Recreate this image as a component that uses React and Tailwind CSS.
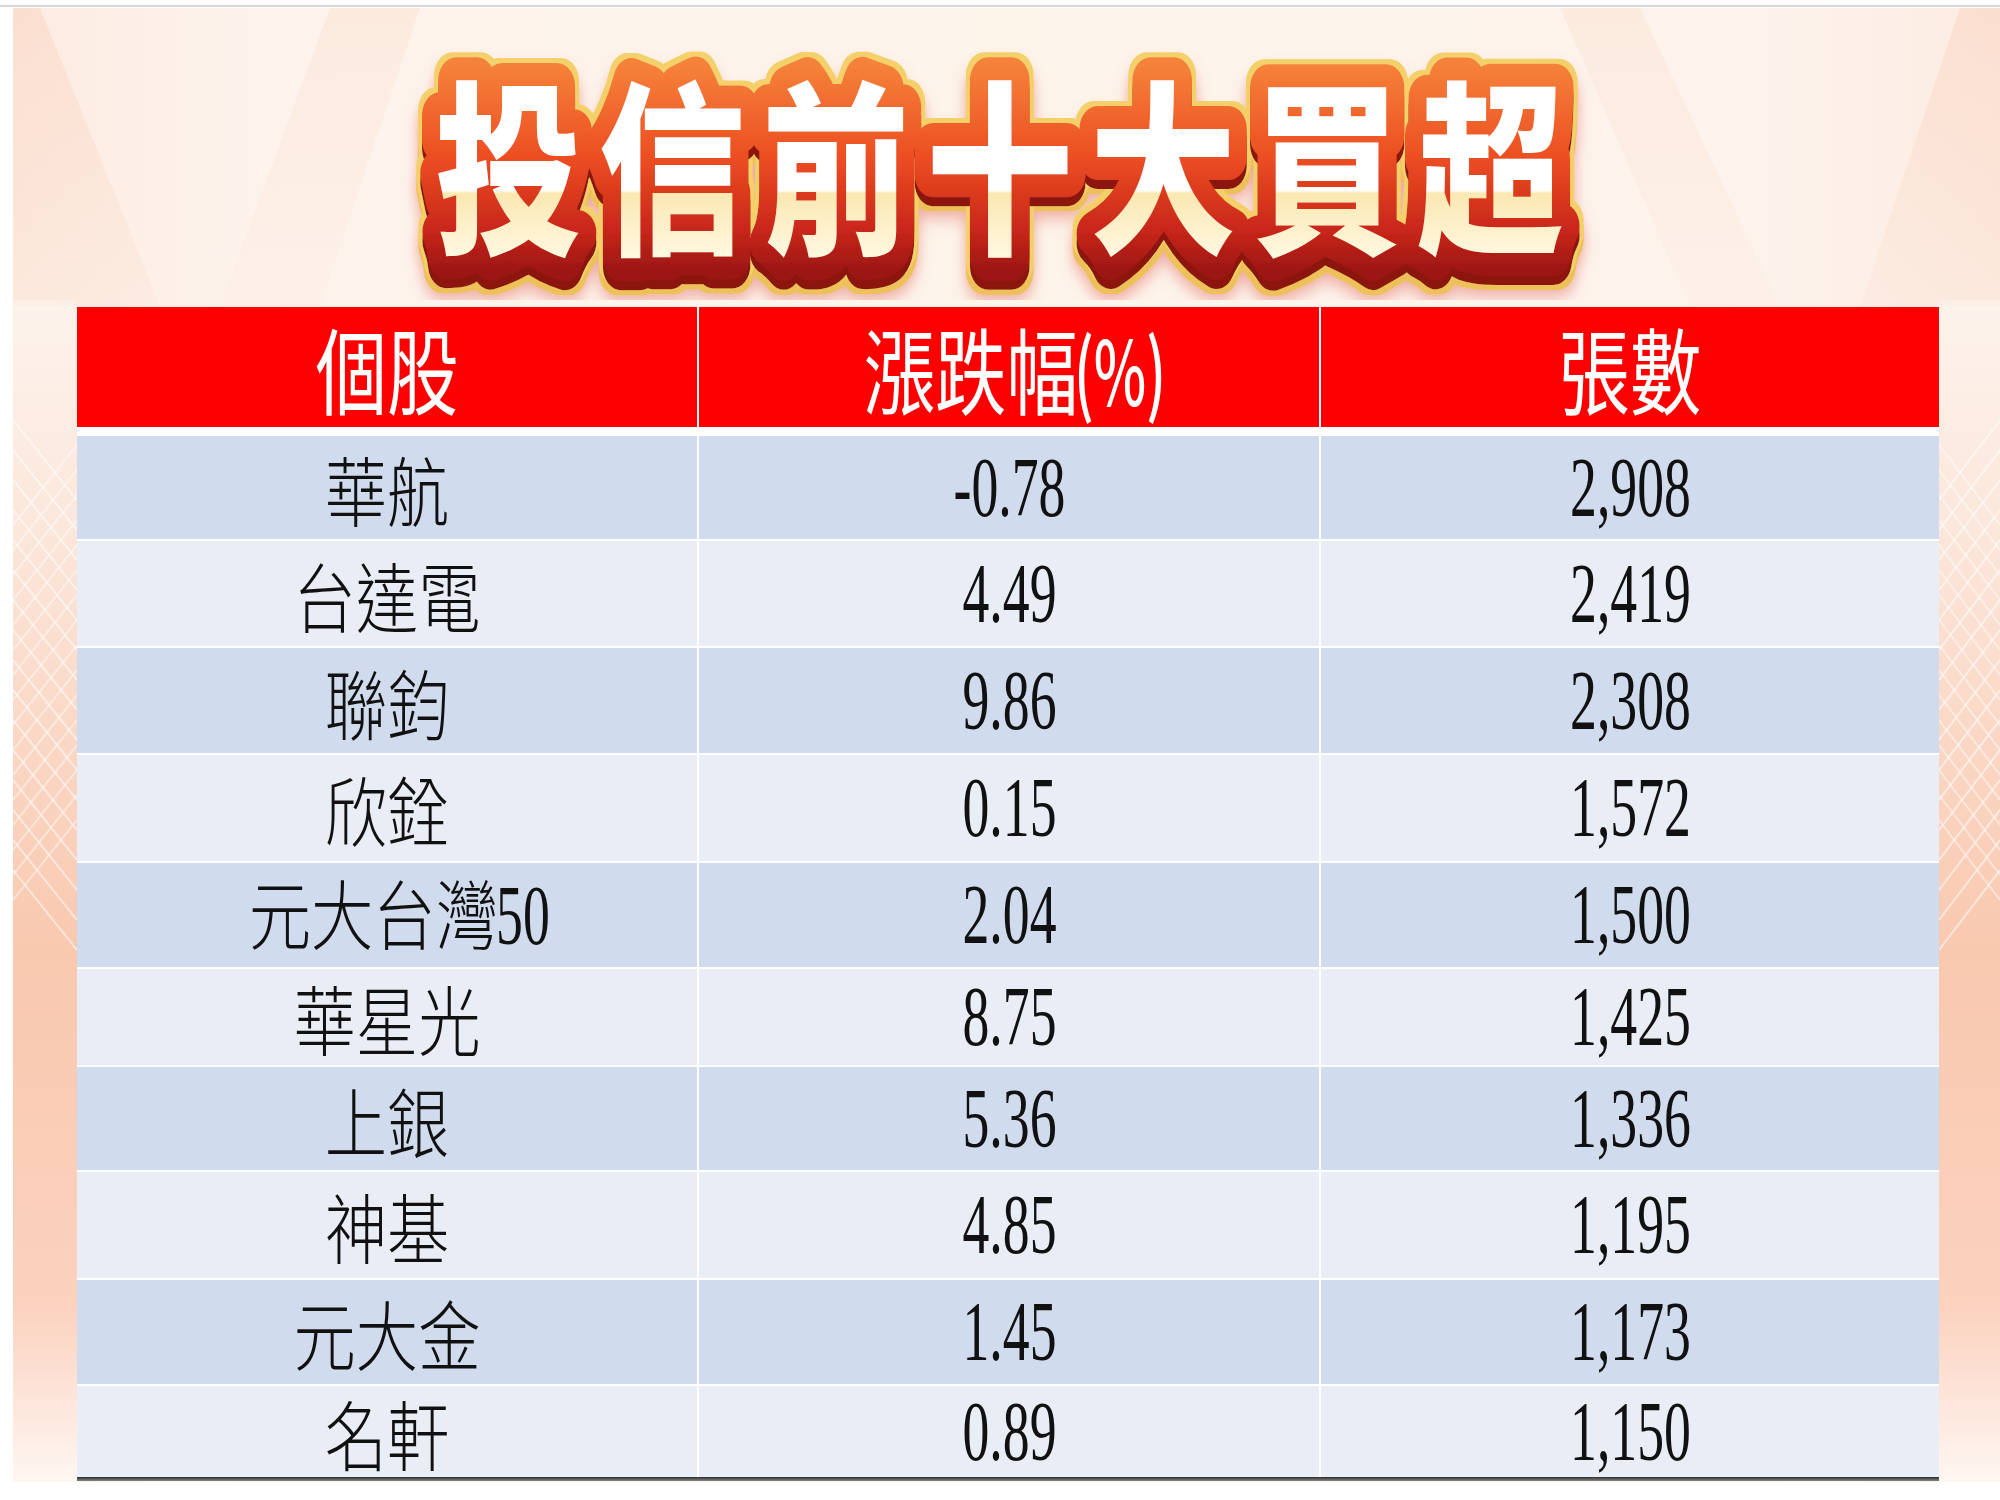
import React from "react";

const rows = [
  ["華航", "-0.78", "2,908"],
  ["台達電", "4.49", "2,419"],
  ["聯鈞", "9.86", "2,308"],
  ["欣銓", "0.15", "1,572"],
  ["元大台灣", "2.04", "1,500", "50"],
  ["華星光", "8.75", "1,425"],
  ["上銀", "5.36", "1,336"],
  ["神基", "4.85", "1,195"],
  ["元大金", "1.45", "1,173"],
  ["名軒", "0.89", "1,150"],
];

const rowHeights = [103, 105, 105, 106, 104, 96, 103, 106, 104, 91];

function Background() {
  const stripes = [];
  for (let i = 0; i < 16; i++) stripes.push(i);
  return (
    <svg className="absolute left-0 top-0" width="2000" height="1500" viewBox="0 0 2000 1500">
      <defs>
        <linearGradient id="sideL" x1="0" y1="0" x2="0" y2="1">
          <stop offset="0" stopColor="#fdf3ec" />
          <stop offset="0.2" stopColor="#fbe6da" />
          <stop offset="0.55" stopColor="#f9c8af" />
          <stop offset="0.85" stopColor="#fbd2be" />
          <stop offset="1" stopColor="#fff6f2" />
        </linearGradient>
        <linearGradient id="topBand" x1="0" y1="0" x2="1" y2="0">
          <stop offset="0" stopColor="#fcebe1" />
          <stop offset="0.12" stopColor="#fdf3ec" />
          <stop offset="0.5" stopColor="#fdf4ea" />
          <stop offset="0.88" stopColor="#fdf3ec" />
          <stop offset="1" stopColor="#fcebe1" />
        </linearGradient>
        <linearGradient id="beam" x1="0" y1="0" x2="0" y2="1">
          <stop offset="0" stopColor="#f8c9b0" stopOpacity="0.35" />
          <stop offset="1" stopColor="#f8c9b0" stopOpacity="0.1" />
        </linearGradient>
      </defs>
      <rect x="0" y="0" width="2000" height="1500" fill="#ffffff" />
      <rect x="0" y="5" width="2000" height="2" fill="#d6d6d6" />
      <rect x="13" y="8" width="1987" height="1474" fill="url(#topBand)" />
      <rect x="13" y="300" width="64" height="1182" fill="url(#sideL)" />
      <rect x="1939" y="300" width="61" height="1182" fill="url(#sideL)" />
      <polygon points="13,8 40,8 160,306 13,306" fill="url(#beam)" />
      <polygon points="330,8 420,8 320,306 220,306" fill="url(#beam)" opacity="0.6" />
      <polygon points="1560,8 1640,8 1780,306 1690,306" fill="url(#beam)" opacity="0.6" />
      <polygon points="1960,8 2000,8 2000,306 1860,306" fill="url(#beam)" />
      {stripes.map((i) => (
        <line key={"l" + i} x1="13" y1={420 + i * 30} x2="77" y2={500 + i * 30} stroke="#ffffff" strokeOpacity="0.55" strokeWidth="2" />
      ))}
      {stripes.map((i) => (
        <line key={"m" + i} x1="13" y1={900 - i * 25} x2="77" y2={820 - i * 25} stroke="#ffffff" strokeOpacity="0.45" strokeWidth="2" />
      ))}
      {stripes.map((i) => (
        <line key={"r" + i} x1="1939" y1={500 + i * 30} x2="2000" y2={420 + i * 30} stroke="#ffffff" strokeOpacity="0.55" strokeWidth="2" />
      ))}
      {stripes.map((i) => (
        <line key={"s" + i} x1="1939" y1={820 - i * 25} x2="2000" y2={900 - i * 25} stroke="#ffffff" strokeOpacity="0.45" strokeWidth="2" />
      ))}
    </svg>
  );
}

function Title() {
  return (
    <svg width="1240" height="292" viewBox="0 0 1240 292">
      <defs>
        <linearGradient id="redG" gradientUnits="userSpaceOnUse" x1="0" y1="56" x2="0" y2="264">
          <stop offset="0" stopColor="#f5823a" />
          <stop offset="0.45" stopColor="#ec4e22" />
          <stop offset="0.8" stopColor="#c8261a" />
          <stop offset="1" stopColor="#9c1612" />
        </linearGradient>
        <linearGradient id="fillG" gradientUnits="userSpaceOnUse" x1="0" y1="78" x2="0" y2="246">
          <stop offset="0" stopColor="#ffffff" />
          <stop offset="0.62" stopColor="#ffffff" />
          <stop offset="0.64" stopColor="#fbe8b2" />
          <stop offset="1" stopColor="#fff7de" />
        </linearGradient>
        <filter id="titleFx" x="-5%" y="-20%" width="110%" height="150%">
          <feMorphology in="SourceAlpha" operator="dilate" radius="5" result="d1" />
          <feFlood floodColor="#f4d06a" result="goldC" />
          <feComposite in="goldC" in2="d1" operator="in" result="gold" />
          <feOffset in="SourceAlpha" dy="9" result="off" />
          <feFlood floodColor="#8c1511" result="extC" />
          <feComposite in="extC" in2="off" operator="in" result="ext" />
          <feMorphology in="off" operator="dilate" radius="5" result="offd" />
          <feFlood floodColor="#eec05a" result="gold2C" />
          <feComposite in="gold2C" in2="offd" operator="in" result="goldExt" />
          <feGaussianBlur in="offd" stdDeviation="9" result="blurA" />
          <feOffset in="blurA" dy="6" result="blurB" />
          <feFlood floodColor="#e0685e" floodOpacity="0.55" result="glowC" />
          <feComposite in="glowC" in2="blurB" operator="in" result="glow" />
          <feMerge>
            <feMergeNode in="glow" />
            <feMergeNode in="goldExt" />
            <feMergeNode in="gold" />
            <feMergeNode in="ext" />
            <feMergeNode in="SourceGraphic" />
          </feMerge>
        </filter>
      </defs>
      <g transform="translate(620 0) scale(0.787 1)">
        <text
          x="0"
          y="232"
          textAnchor="middle"
          fontSize="186"
          fontWeight="900"
          letterSpacing="22"
          fontFamily='"Noto Sans CJK TC", "Noto Sans CJK SC", sans-serif'
          fill="url(#fillG)"
          stroke="url(#redG)"
          strokeWidth="46"
          strokeLinejoin="round"
          filter="url(#titleFx)"
          style={{ paintOrder: "stroke" }}
        >
          投信前十大買超
        </text>
      </g>
    </svg>
  );
}

function Num({ children }) {
  return (
    <span className="inline-block scale-x-[0.64] font-['Liberation_Serif',serif] text-[84px] leading-none text-[#111]">
      {children}
    </span>
  );
}

export default function App() {
  return (
    <div className="relative h-[1500px] w-[2000px] overflow-hidden bg-white">
      <Background />
      <div className="relative flex flex-col pl-[77px] pt-[8px]">
        <div className="flex h-[299px] w-[1862px] items-start justify-center">
          <Title />
        </div>
        <div className="flex w-[1862px] flex-col bg-white">
          <div className="grid h-[120px] grid-cols-[620px_620px_618px] gap-x-[2px] bg-white font-['Noto_Sans_CJK_TC',sans-serif] text-white">
            <div className="flex items-center justify-center bg-[#ff0000]">
              <span className="inline-block scale-x-[0.76] text-[94px] leading-none">個股</span>
            </div>
            <div className="flex items-center justify-center bg-[#ff0000]">
              <span className="flex items-center">
                <span className="inline-block origin-right scale-x-[0.76] text-[94px] leading-none">漲跌幅</span>
                <span className="-ml-[4px] inline-block origin-left scale-x-[0.62] text-[90px] font-medium leading-none">(%)</span>
              </span>
            </div>
            <div className="flex items-center justify-center bg-[#ff0000]">
              <span className="inline-block scale-x-[0.76] text-[94px] leading-none">張數</span>
            </div>
          </div>
          <div className="h-[9px] bg-white" />
          <div className="flex flex-col gap-y-[2px] bg-white">
            {rows.map((r, i) => (
              <div
                key={r[0]}
                className={
                  "grid grid-cols-[620px_620px_618px] gap-x-[2px] " +
                  (i % 2 === 0 ? "[&>div]:bg-[#d0dbed]" : "[&>div]:bg-[#e9edf6]")
                }
                style={{ height: rowHeights[i] }}
              >
                <div className="flex items-center justify-center">
                  {r[3] ? (
                    <span className="flex items-baseline">
                      <span className="inline-block origin-right scale-x-[0.82] font-['Noto_Sans_CJK_TC_Light','Noto_Sans_CJK_TC',sans-serif] text-[76px] font-light leading-none text-[#111]">
                        {r[0]}
                      </span>
                      <span className="-ml-[2px] inline-block origin-left scale-x-[0.64] font-['Liberation_Serif',serif] text-[84px] leading-none text-[#111]">
                        {r[3]}
                      </span>
                    </span>
                  ) : (
                    <span className="inline-block scale-x-[0.82] font-['Noto_Sans_CJK_TC_Light','Noto_Sans_CJK_TC',sans-serif] text-[76px] font-light leading-none text-[#111]">
                      {r[0]}
                    </span>
                  )}
                </div>
                <div className="flex items-center justify-center">
                  <Num>{r[1]}</Num>
                </div>
                <div className="flex items-center justify-center">
                  <Num>{r[2]}</Num>
                </div>
              </div>
            ))}
          </div>
          <div className="h-[4px] bg-gradient-to-b from-[#2e2e2e] to-[#8a8a8a]" />
        </div>
      </div>
    </div>
  );
}
